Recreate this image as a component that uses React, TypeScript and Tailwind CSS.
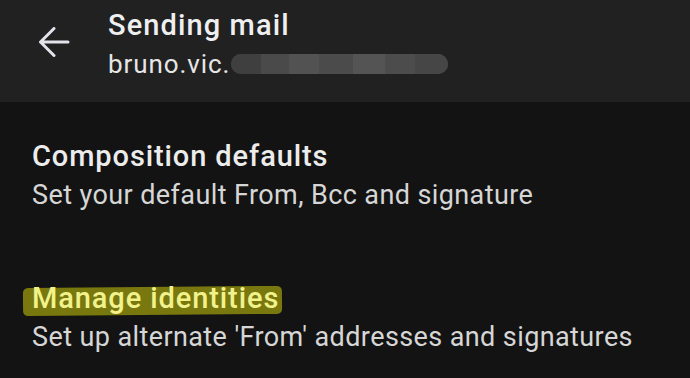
function SettingRow({ title, subtitle, marked }: { title: string; subtitle: string; marked?: boolean }) {
  return (
    <div className="flex flex-col px-8">
      <div className="h-[36px] text-[29px] leading-[36px] font-medium tracking-[0.9px] text-[#ececec]">
        {marked ? (
          <span className="relative inline-block">
            {/* highlighter stroke */}
            <span className="absolute left-[-9px] right-[-3px] top-[7px] h-[28px] rounded-[5px] bg-[#78780f] -rotate-[0.5deg]" />
            <span className="relative text-[#f2f28c]">{title}</span>
          </span>
        ) : (
          title
        )}
      </div>
      <div className="text-[27px] leading-[42px] tracking-[0.4px] text-[#d6d6d6]">{subtitle}</div>
    </div>
  );
}

export default function App() {
  return (
    <div
      className="flex h-[378px] w-[690px] flex-col overflow-hidden bg-[#131313]"
      style={{ fontFamily: "Roboto, 'Noto Sans', sans-serif" }}
    >
      {/* App bar */}
      <div className="flex h-[102px] items-start bg-[#212121]">
        <svg
          className="ml-[38px] mt-[27px] shrink-0"
          width="32"
          height="30"
          viewBox="0 0 32 30"
          fill="none"
          stroke="#e4e2ea"
          strokeWidth="3"
          strokeLinecap="round"
          strokeLinejoin="round"
        >
          <path d="M16 1.5 2.5 15 16 28.5M2.5 15H30" />
        </svg>
        <div className="ml-[38px] mt-[8px] flex flex-col gap-[5px]">
          <span className="text-[29px] leading-[34px] font-medium tracking-[1.1px] text-[#efeff1]">Sending mail</span>
          <div className="flex items-center text-[26px] leading-[34px] tracking-[0.9px] text-[#e6e6e6]">
            <span>bruno.vic.</span>
            <span className="ml-[1px] flex h-[20px] w-[217px] overflow-hidden rounded-full bg-[#474747]">
              <span className="h-full w-[30px] bg-[#3f3f3f]" />
              <span className="h-full w-[28px] bg-[#4a4a4a]" />
              <span className="h-full w-[30px] bg-[#525252]" />
              <span className="h-full w-[34px] bg-[#4b4b4b]" />
              <span className="h-full w-[32px] bg-[#545454]" />
              <span className="h-full w-[30px] bg-[#4c4c4c]" />
              <span className="h-full flex-1 bg-[#464646]" />
            </span>
          </div>
        </div>
      </div>

      <div className="mt-[36px] flex flex-col gap-[64px]">
        <SettingRow title="Composition defaults" subtitle="Set your default From, Bcc and signature" />
        <SettingRow marked title="Manage identities" subtitle="Set up alternate 'From' addresses and signatures" />
      </div>
    </div>
  );
}
